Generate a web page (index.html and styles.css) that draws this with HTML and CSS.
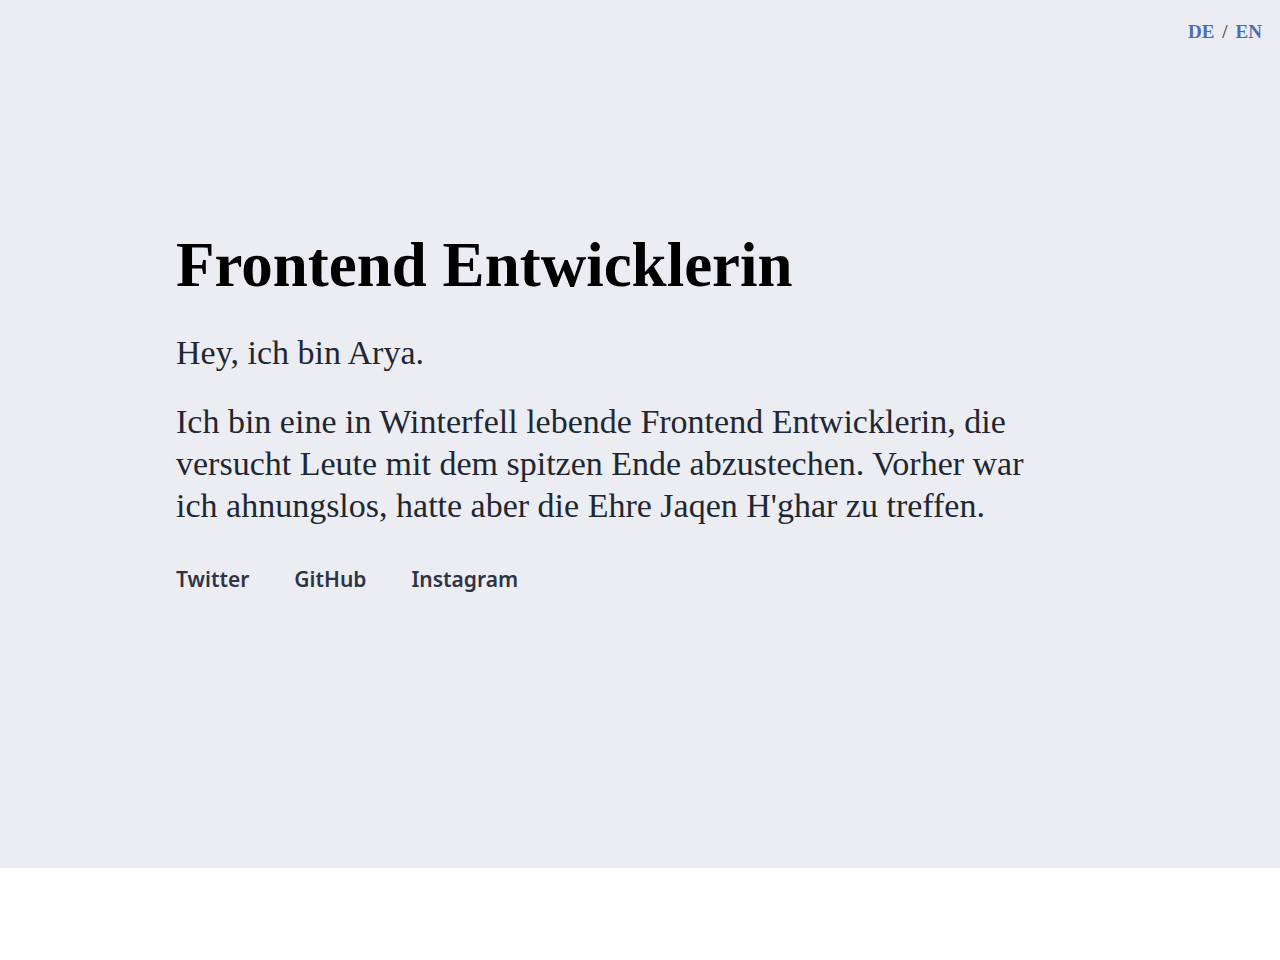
FILE: index.html
```html
<!DOCTYPE html>
<html lang="de">
<head>
<meta charset="utf-8">
<title>Arya – Frontend Entwicklerin</title>
<link rel="stylesheet" href="styles.css">
</head>
<body>
<header class="hero">
  <nav class="lang">
    <a href="#" class="lang-link">DE</a>
    <span class="lang-sep">/</span>
    <a href="#" class="lang-link">EN</a>
  </nav>
  <div class="hero-inner">
    <h1 class="title">Frontend Entwicklerin</h1>
    <p class="intro">Hey, ich bin Arya.</p>
    <p class="bio">Ich bin eine in Winterfell lebende Frontend Entwicklerin, die versucht Leute mit dem spitzen Ende abzustechen. Vorher war ich ahnungslos, hatte aber die Ehre Jaqen H'ghar zu treffen.</p>
    <ul class="social">
      <li><a href="#" class="social-link">Twitter</a></li>
      <li><a href="#" class="social-link">GitHub</a></li>
      <li><a href="#" class="social-link">Instagram</a></li>
    </ul>
  </div>
</header>
</body>
</html>
```
FILE: styles.css
```css
* { box-sizing: border-box; }
html, body { margin: 0; padding: 0; }
body {
  background: #ffffff;
  font-family: "Liberation Serif", "Times New Roman", serif;
  color: #1f2733;
}
.hero {
  position: relative;
  height: 868px;
  background: #ebedf2;
  display: flex;
  flex-direction: column;
  justify-content: center;
}
.lang {
  position: absolute;
  top: 20px;
  right: 18px;
  display: flex;
  gap: 8px;
  font-size: 19px;
  font-weight: 700;
  line-height: 24px;
}
.lang-link {
  color: #4a6db5;
  text-decoration: none;
}
.lang-sep {
  color: #1f2733;
  font-weight: 400;
}
.hero-inner {
  width: 928px;
  margin: 0 auto;
  padding-bottom: 46px;
}
.title {
  margin: 0;
  font-size: 63px;
  font-weight: 700;
  line-height: 76px;
  color: #000000;
}
.intro {
  margin: 28px 0 0;
  font-size: 34px;
  line-height: 44px;
}
.bio {
  max-width: 880px;
  margin: 26px 0 0;
  font-size: 34px;
  line-height: 42px;
}
.social {
  list-style: none;
  margin: 36px 0 0;
  padding: 0;
  display: flex;
  gap: 45px;
}
.social-link {
  font-family: "Noto Sans", "Open Sans", sans-serif;
  font-weight: 600;
  font-size: 21px;
  line-height: 32px;
  color: #2e3445;
  text-decoration: none;
}
```
